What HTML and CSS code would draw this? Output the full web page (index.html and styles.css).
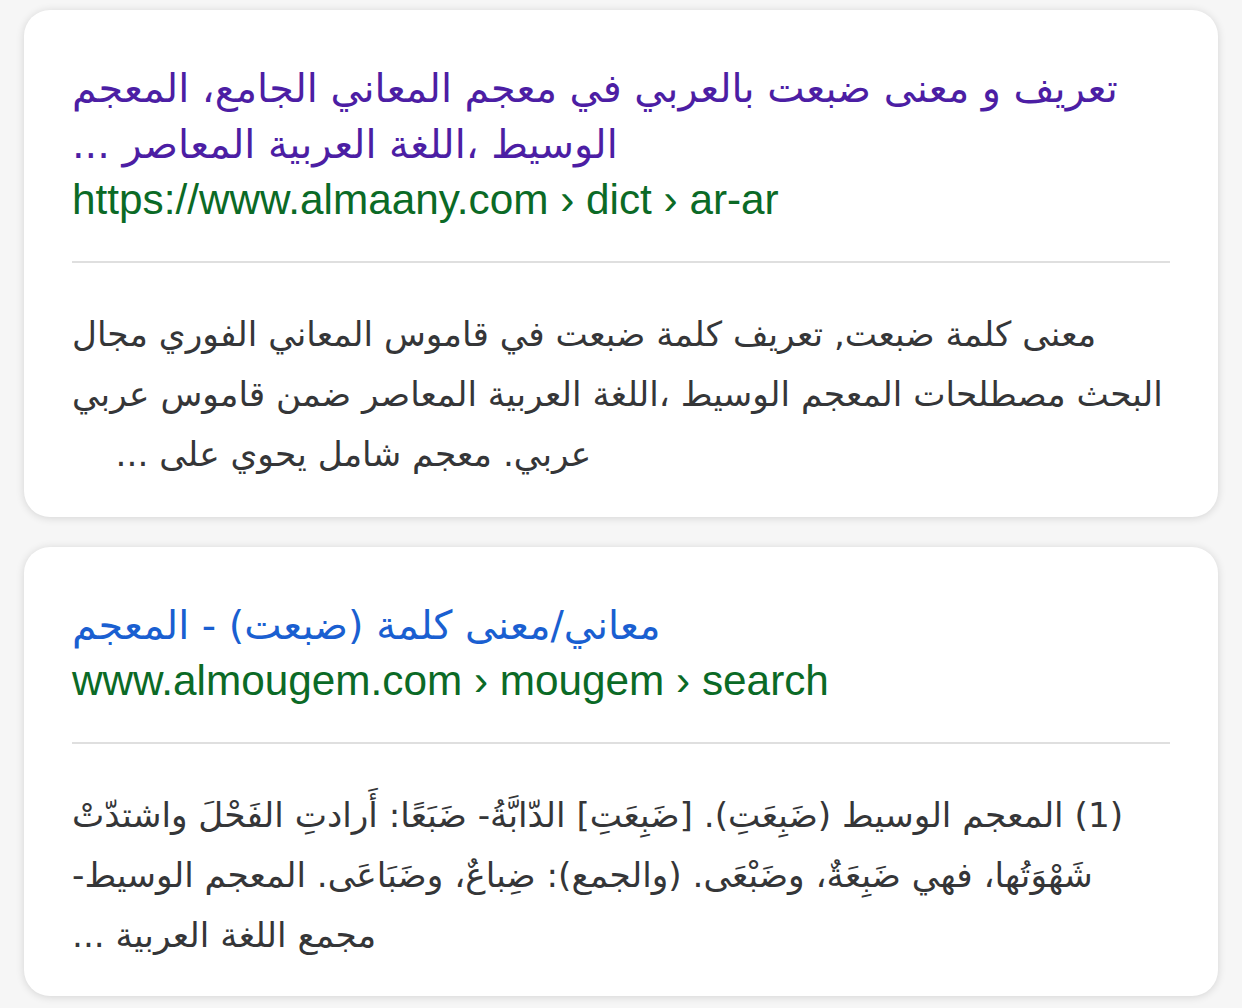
FILE: index.html
```html
<!DOCTYPE html>
<html lang="ar">
<head>
<meta charset="utf-8">
<title>نتائج البحث</title>
<link rel="stylesheet" href="styles.css">
</head>
<body>
<main class="results">
  <section class="card card-first">
    <a class="title visited" dir="rtl">تعريف و معنى ضبعت بالعربي في معجم المعاني الجامع، المعجم الوسيط ،اللغة العربية المعاصر ...</a>
    <div class="url">https://www.almaany.com › dict › ar-ar</div>
    <hr class="divider">
    <p class="snippet" dir="rtl">معنى كلمة ضبعت, تعريف كلمة ضبعت في قاموس المعاني الفوري مجال البحث مصطلحات المعجم الوسيط ،اللغة العربية المعاصر ضمن قاموس عربي عربي. معجم شامل يحوي على ...&nbsp;&nbsp;&nbsp;&nbsp;</p>
  </section>
  <section class="card">
    <a class="title" dir="rtl">معاني/معنى كلمة (ضبعت) - المعجم</a>
    <div class="url">www.almougem.com › mougem › search</div>
    <hr class="divider">
    <p class="snippet" dir="rtl">(1) المعجم الوسيط (ضَبِعَتِ). [ضَبِعَتِ] الدّابَّةُ- ضَبَعًا: أَرادتِ الفَحْلَ واشتدّتْ شَهْوَتُها، فهي ضَبِعَةٌ، وضَبْعَى. (والجمع): ضِباعٌ، وضَبَاعَى. المعجم الوسيط- مجمع اللغة العربية ...</p>
  </section>
</main>
</body>
</html>
```
FILE: styles.css
```css
html, body {
  margin: 0;
  padding: 0;
}
body {
  background: #f6f6f6;
  font-family: "DejaVu Sans", "Liberation Sans", sans-serif;
}
.results {
  display: flex;
  flex-direction: column;
  gap: 30px;
  padding: 10px 24px 13px;
}
.card {
  background: #ffffff;
  border-radius: 26px;
  box-shadow: 0 1px 8px rgba(0, 0, 0, 0.14);
  padding: 50px 48px 31px;
  display: flex;
  flex-direction: column;
}
.card-first {
  padding-bottom: 33px;
}
.title {
  display: block;
  text-align: left;
  font-size: 39.7px;
  line-height: 56px;
  color: #1a5fd1;
  text-decoration: none;
}
.title.visited {
  color: #4c1ea4;
}
.url {
  font-family: "Liberation Sans", Arial, sans-serif;
  font-size: 42.3px;
  line-height: 56px;
  color: #0b6a26;
  white-space: nowrap;
}
.divider {
  border: 0;
  border-top: 2px solid #dfdfdf;
  margin: 33px 0 0;
  height: 0;
}
.snippet {
  margin: 41px 0 0;
  text-align: left;
  font-size: 34.3px;
  line-height: 60px;
  color: #353638;
}
```
